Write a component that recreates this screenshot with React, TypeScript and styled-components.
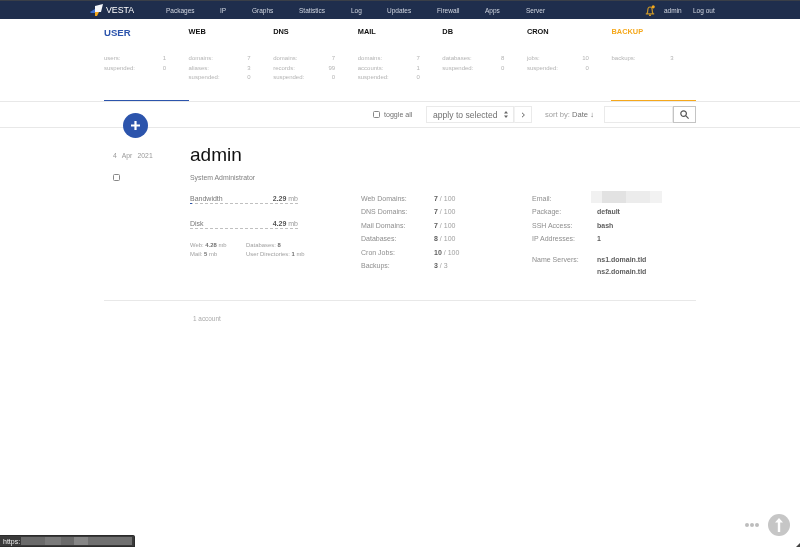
import React from "react";
import styled, { createGlobalStyle } from "styled-components";

const Global = createGlobalStyle`
  html, body { margin: 0; padding: 0; background: #fff; }
  body { font-family: "Liberation Sans", Arial, sans-serif; overflow: hidden; }
  #root { width: 800px; height: 547px; position: relative; overflow: hidden; will-change: transform; }
`;

const TopBar = styled.header`
  height: 18px;
  border-top: 1px solid #3a3f48;
  background: #1f2e4d;
  display: flex;
  align-items: center;
  padding-left: 90px;
  color: #d2d7e1;
  font-size: 6.5px;
`;
const Logo = styled.div`
  display: flex;
  align-items: center;
  gap: 3px;
  width: 76px;
  color: #fff;
  font-size: 8.8px;
`;
const NavItem = styled.span<{ $w: number }>`
  width: ${(p) => p.$w}px;
  flex: none;
`;
const Bell = styled.span`
  display: flex;
  margin: 0 9px 0 0;
`;
const Tabs = styled.section`
  display: flex;
  margin-left: 104px;
  width: 592px;
  height: 82px;
`;
const Tab = styled.div<{ $color: string }>`
  flex: 1;
  box-sizing: border-box;
  padding-top: 9px;
  height: 82px;
  border-bottom: 1px solid ${(p) => p.$color};
`;
const TabTitle = styled.div<{ $color: string; $big?: boolean }>`
  color: ${(p) => p.$color};
  font-weight: bold;
  font-size: ${(p) => (p.$big ? "9.6px" : "7.4px")};
  height: 17px;
  line-height: ${(p) => (p.$big ? "10px" : "7px")};
  margin-bottom: 9px;
`;
const StatRow = styled.div`
  display: flex;
  font-size: 6px;
  line-height: 9.7px;
  color: #b4b4b4;
  width: 62px;
  justify-content: space-between;
`;
const Toolbar = styled.section`
  height: 25px;
  border-top: 1px solid #e8e8e8;
  border-bottom: 1px solid #e8e8e8;
  display: flex;
  align-items: center;
  padding-left: 373px;
  color: #777;
  font-size: 7.1px;
`;
const Check = styled.span<{ $mr?: number }>`
  display: inline-block;
  box-sizing: border-box;
  width: 7px;
  height: 7px;
  border: 1px solid #888;
  border-radius: 1.5px;
  margin-right: ${(p) => p.$mr ?? 0}px;
  background: #fff;
`;
const ToggleLabel = styled.span`
  width: 42px;
  color: #707070;
`;
const SelectBox = styled.div`
  box-sizing: border-box;
  width: 88px;
  height: 17px;
  border: 1px solid #eaeaea;
  display: flex;
  align-items: center;
  justify-content: space-between;
  padding: 0 5px 0 6px;
  color: #707070;
  font-size: 8.6px;
`;
const ApplyBox = styled.div`
  box-sizing: border-box;
  width: 18px;
  height: 17px;
  border: 1px solid #eaeaea;
  border-left: 1px solid #f2f2f2;
  display: flex;
  align-items: center;
  justify-content: center;
`;
const SortLabel = styled.span`
  margin-left: 13px;
  width: 59px;
  color: #a0a0a0;
  font-size: 7.6px;
  b { color: #707070; font-weight: normal; }
`;
const SearchInput = styled.div`
  box-sizing: border-box;
  width: 69px;
  height: 17px;
  border: 1px solid #eaeaea;
`;
const SearchButton = styled.div`
  box-sizing: border-box;
  width: 23px;
  height: 17px;
  border: 1px solid #c4c4c4;
  display: flex;
  align-items: center;
  justify-content: center;
`;
const PlusButton = styled.div`
  position: absolute;
  left: 123px;
  top: 113px;
  width: 25px;
  height: 25px;
  border-radius: 50%;
  background: #2c54ac;
  display: flex;
  align-items: center;
  justify-content: center;
`;
const Row = styled.section`
  margin: 0 104px;
  height: 172px;
  border-bottom: 1px solid #e8e8e8;
  display: flex;
`;
const Side = styled.div`
  width: 86px;
  padding: 23px 0 0 9px;
  box-sizing: border-box;
  font-size: 6.8px;
  color: #999;
  word-spacing: 3.4px;
  display: flex;
  flex-direction: column;
  gap: 13px;
  align-items: flex-start;
  line-height: 10px;
`;
const Main = styled.div`
  padding-top: 16px;
  flex: 1;
`;
const Name = styled.h1`
  margin: 0;
  font-weight: normal;
  font-size: 19px;
  line-height: 22px;
  color: #111;
`;
const Role = styled.div`
  margin-top: 8px;
  font-size: 6.9px;
  line-height: 8px;
  color: #808080;
`;
const Columns = styled.div`
  display: flex;
  margin-top: 12px;
`;
const Usage = styled.div`
  width: 171px;
`;
const Meter = styled.div`
  width: 108px;
  height: 9px;
  margin-bottom: 15px;
  display: flex;
  justify-content: space-between;
  font-size: 7px;
  line-height: 9px;
  color: #777;
  border-bottom: 1px dashed #c0c0c0;
  position: relative;
  b { color: #555; }
  span span { color: #999; }
`;
const MeterFill = styled.i`
  position: absolute;
  left: 0;
  bottom: -1px;
  width: 2px;
  height: 1px;
  background: #2c54ac;
`;
const Mini = styled.div`
  display: flex;
  margin-top: -3px;
  font-size: 5.9px;
  line-height: 9px;
  color: #a0a0a0;
  b { color: #707070; }
`;
const MiniCol = styled.div<{ $w: number }>`
  width: ${(p) => p.$w}px;
`;
const Info = styled.div<{ $w: number; $lw: number }>`
  width: ${(p) => p.$w}px;
  font-size: 7px;
  display: grid;
  grid-template-columns: ${(p) => p.$lw}px 1fr;
  grid-auto-rows: 13.4px;
  color: #8e8e8e;
  line-height: 10px;
`;
const Val = styled.span`
  color: #a0a0a0;
  b { color: #5e5e5e; }
`;
const Strong = styled.b`
  color: #5e5e5e;
`;
const Servers = styled.div`
  grid-column: 2;
  line-height: 12px;
  margin-top: 6.5px;
  color: #5e5e5e;
  font-weight: bold;
`;
const ServersLabel = styled.div`
  margin-top: 7.5px;
`;
const Redacted = styled.div`
  width: 71px;
  height: 12px;
  margin: -3px 0 0 -6px;
  background: linear-gradient(90deg, #f1f1f1 0 15%, #e2e2e2 15% 50%, #ececec 50% 83%, #f2f2f2 83%);
`;
const Footer = styled.div`
  margin: 14px 0 0 193px;
  font-size: 6.4px;
  line-height: 8px;
  color: #aaa;
`;
const Dots = styled.div`
  position: absolute;
  left: 745px;
  top: 523px;
  display: flex;
  gap: 1px;
  i { width: 4px; height: 4px; border-radius: 50%; background: #bdbdbd; }
`;
const TopButton = styled.div`
  position: absolute;
  left: 768px;
  top: 514px;
  width: 22px;
  height: 22px;
  border-radius: 50%;
  background: #c6c6c6;
  display: flex;
  align-items: center;
  justify-content: center;
`;
const StatusBar = styled.div`
  position: absolute;
  left: 0;
  top: 535px;
  width: 135px;
  height: 12px;
  box-sizing: border-box;
  background: #3a3a3a;
  border: 1px solid #2b2b2b;
  border-left: none;
  border-radius: 0 2px 0 0;
  color: #eee;
  font-size: 7px;
  line-height: 11px;
  padding-left: 3px;
  display: flex;
  gap: 1px;
`;
const StatusMask = styled.i`
  flex: 1;
  margin: 1px 2px 1px 0;
  background: linear-gradient(90deg, #6a6a6a 0 22%, #7a7a7a 22% 36%, #6a6a6a 36% 48%, #868686 48% 60%, #707070 60%);
`;
const Corner = styled.i`
  position: absolute;
  right: 0;
  bottom: 0;
  width: 0;
  height: 0;
  border-style: solid;
  border-width: 0 0 4px 4px;
  border-color: transparent transparent #444 transparent;
`;

const nav: [string, number][] = [
  ["Packages", 54], ["IP", 32], ["Graphs", 47], ["Statistics", 52], ["Log", 36],
  ["Updates", 50], ["Firewall", 48], ["Apps", 41], ["Server", 119],
];

const tabs = [
  { t: "USER", c: "#2c54ac", u: "#2c54ac", big: true, s: [["users:", "1"], ["suspended:", "0"]] },
  { t: "WEB", c: "#111", u: "transparent", s: [["domains:", "7"], ["aliases:", "3"], ["suspended:", "0"]] },
  { t: "DNS", c: "#111", u: "transparent", s: [["domains:", "7"], ["records:", "99"], ["suspended:", "0"]] },
  { t: "MAIL", c: "#111", u: "transparent", s: [["domains:", "7"], ["accounts:", "1"], ["suspended:", "0"]] },
  { t: "DB", c: "#111", u: "transparent", s: [["databases:", "8"], ["suspended:", "0"]] },
  { t: "CRON", c: "#111", u: "transparent", s: [["jobs:", "10"], ["suspended:", "0"]] },
  { t: "BACKUP", c: "#f5a81c", u: "#f5a81c", s: [["backups:", "3"]] },
];

export default function App() {
  return (
    <>
      <Global />
      <TopBar>
        <Logo>
          <svg width="13" height="12" viewBox="0 0 13 12">
            <polygon points="0,8 5,5 5,9 1,9" fill="#3c6fd0" />
            <polygon points="5,2 13,0 11,8 5,8" fill="#f4f6fa" />
            <polygon points="5,8 9,8 7,12 5,12" fill="#f5a81c" />
          </svg>
          <span>VESTA</span>
        </Logo>
        {nav.map(([n, w]) => (
          <NavItem key={n} $w={w}>{n}</NavItem>
        ))}
        <Bell>
          <svg width="10" height="11" viewBox="0 0 10 11" fill="none" stroke="#c9962a" strokeWidth="1.2">
            <path d="M.8 8.8h8.4M1.8 8.8c1-1 1-2 1-3.8s1-3 2.2-3 2.2 1.2 2.2 3 0 2.8 1 3.8M4 10.4h2" />
            <circle cx="8.2" cy="1.8" r="1.6" fill="#f5a81c" stroke="none" />
          </svg>
        </Bell>
        <NavItem $w={29}>admin</NavItem>
        <NavItem $w={30}>Log out</NavItem>
      </TopBar>
      <Tabs>
        {tabs.map((tab) => (
          <Tab key={tab.t} $color={tab.u}>
            <TabTitle $color={tab.c} $big={tab.big}>{tab.t}</TabTitle>
            {tab.s.map(([k, v]) => (
              <StatRow key={k}>
                <span>{k}</span>
                <span>{v}</span>
              </StatRow>
            ))}
          </Tab>
        ))}
      </Tabs>
      <Toolbar>
        <Check $mr={4} />
        <ToggleLabel>toggle all</ToggleLabel>
        <SelectBox>
          <span>apply to selected</span>
          <svg width="4" height="7" viewBox="0 0 4 7" fill="#666">
            <path d="M2 0l2 2.6H0zM2 7L0 4.4h4z" />
          </svg>
        </SelectBox>
        <ApplyBox>
          <svg width="5" height="6" viewBox="0 0 5 6" fill="none" stroke="#666" strokeWidth="1">
            <path d="M1 .8 3.4 3 1 5.2" />
          </svg>
        </ApplyBox>
        <SortLabel>sort by: <b>Date ↓</b></SortLabel>
        <SearchInput />
        <SearchButton>
          <svg width="9" height="9" viewBox="0 0 9 9" fill="none" stroke="#555" strokeWidth="1.2">
            <circle cx="3.6" cy="3.6" r="2.8" />
            <path d="M5.7 5.7 8.6 8.6" />
          </svg>
        </SearchButton>
      </Toolbar>
      <PlusButton>
        <svg width="11" height="11" viewBox="0 0 11 11" stroke="#fff" strokeWidth="2.2">
          <path d="M5.5 1v9M1 5.5h9" />
        </svg>
      </PlusButton>
      <Row>
        <Side>
          <span>4 Apr 2021</span>
          <Check />
        </Side>
        <Main>
          <Name>admin</Name>
          <Role>System Administrator</Role>
          <Columns>
            <Usage>
              <Meter>
                <span>Bandwidth</span>
                <span><b>2.29</b> <span>mb</span></span>
                <MeterFill />
              </Meter>
              <Meter>
                <span>Disk</span>
                <span><b>4.29</b> <span>mb</span></span>
              </Meter>
              <Mini>
                <MiniCol $w={56}>
                  <div>Web: <b>4.28</b> mb</div>
                  <div>Mail: <b>5</b> mb</div>
                </MiniCol>
                <MiniCol $w={70}>
                  <div>Databases: <b>8</b></div>
                  <div>User Directories: <b>1</b> mb</div>
                </MiniCol>
              </Mini>
            </Usage>
            <Info $w={171} $lw={73}>
              <span>Web Domains:</span><Val><b>7</b> / 100</Val>
              <span>DNS Domains:</span><Val><b>7</b> / 100</Val>
              <span>Mail Domains:</span><Val><b>7</b> / 100</Val>
              <span>Databases:</span><Val><b>8</b> / 100</Val>
              <span>Cron Jobs:</span><Val><b>10</b> / 100</Val>
              <span>Backups:</span><Val><b>3</b> / 3</Val>
            </Info>
            <Info $w={130} $lw={65}>
              <span>Email:</span><Redacted />
              <span>Package:</span><Strong>default</Strong>
              <span>SSH Access:</span><Strong>bash</Strong>
              <span>IP Addresses:</span><Strong>1</Strong>
              <ServersLabel>Name Servers:</ServersLabel>
              <Servers>ns1.domain.tld<br />ns2.domain.tld</Servers>
            </Info>
          </Columns>
        </Main>
      </Row>
      <Footer>1 account</Footer>
      <Dots><i /><i /><i /></Dots>
      <TopButton>
        <svg width="8" height="14" viewBox="0 0 8 14" fill="#fff">
          <path d="M4 0 8 4.5H5.2V14H2.8V4.5H0z" />
        </svg>
      </TopButton>
      <StatusBar>https:<StatusMask /></StatusBar>
      <Corner />
    </>
  );
}
